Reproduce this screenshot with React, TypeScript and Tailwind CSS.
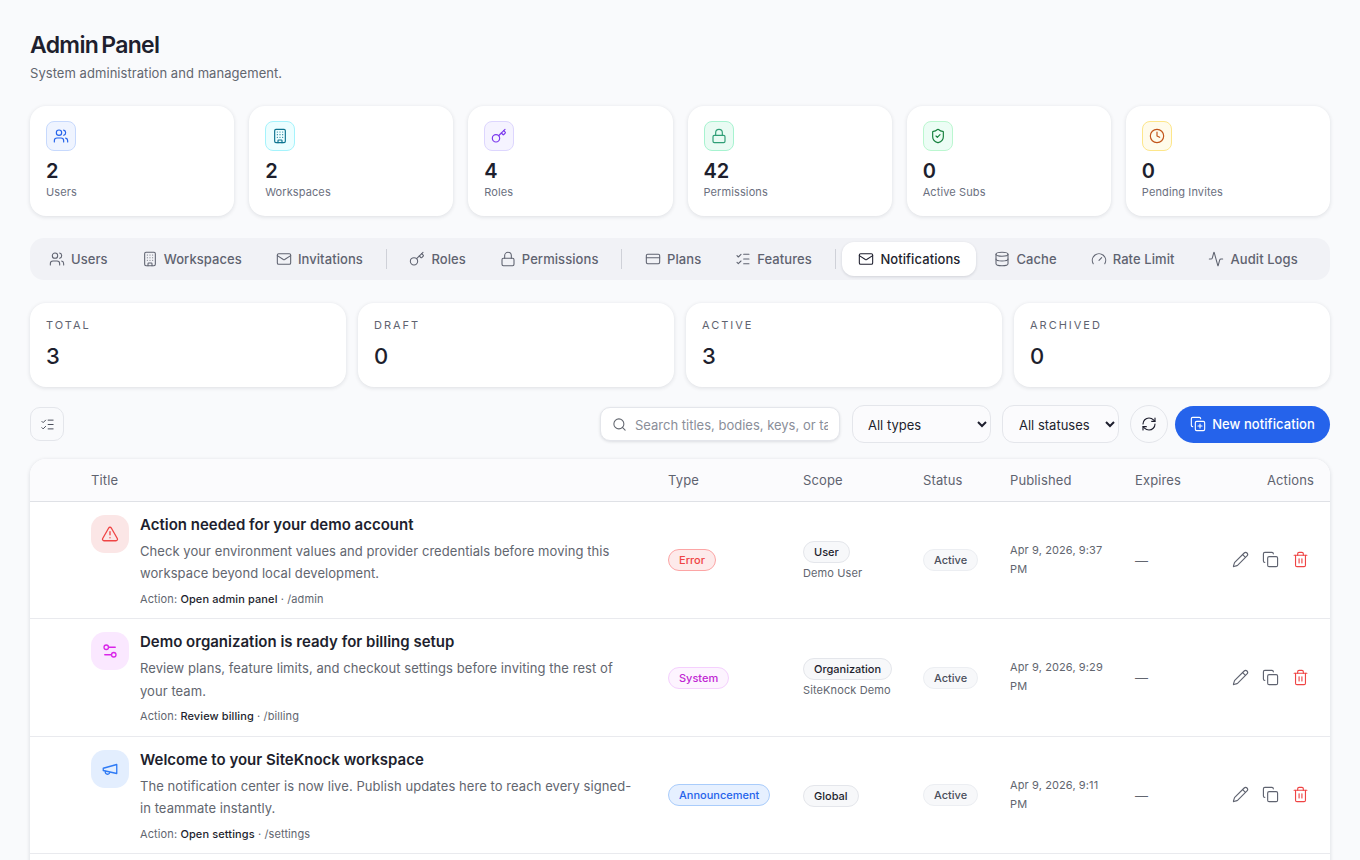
import { Fragment, type ComponentType } from "react";
import {
  Activity,
  Building,
  Clock,
  Copy,
  CopyPlus,
  CreditCard,
  Database,
  Gauge,
  Key,
  ListChecks,
  Lock,
  Mail,
  Pencil,
  RefreshCw,
  Search,
  Settings2,
  ShieldCheck,
  Trash2,
  TriangleAlert,
  Users,
} from "lucide-react";

type IconType = ComponentType<{ className?: string; strokeWidth?: number }>;

function Megaphone({ className, strokeWidth }: { className?: string; strokeWidth?: number }) {
  return (
    <svg className={className} viewBox="0 0 24 24" fill="none" stroke="currentColor" strokeWidth={strokeWidth} strokeLinecap="round" strokeLinejoin="round">
      <path d="m3 11 18-5v12L3 14v-3z" />
      <path d="M11.6 16.8a3 3 0 1 1-5.8-1.6" />
    </svg>
  );
}

const stats: { icon: IconType; value: string; label: string; tone: string }[] = [
  { icon: Users, value: "2", label: "Users", tone: "bg-[#eff4ff] border-[#c7d9fd] text-[#2563eb]" },
  { icon: Building, value: "2", label: "Workspaces", tone: "bg-[#ecfeff] border-[#a5f3fc] text-[#0e7490]" },
  { icon: Key, value: "4", label: "Roles", tone: "bg-[#f5f3ff] border-[#ddd6fe] text-[#7c3aed]" },
  { icon: Lock, value: "42", label: "Permissions", tone: "bg-[#e9fbf3] border-[#a7f3d0] text-[#2f9e76]" },
  { icon: ShieldCheck, value: "0", label: "Active Subs", tone: "bg-[#ecfdf5] border-[#bbf7d0] text-[#15803d]" },
  { icon: Clock, value: "0", label: "Pending Invites", tone: "bg-[#fffbeb] border-[#fde68a] text-[#c2541a]" },
];

const tabGroups: { icon: IconType; label: string; active?: boolean }[][] = [
  [
    { icon: Users, label: "Users" },
    { icon: Building, label: "Workspaces" },
    { icon: Mail, label: "Invitations" },
  ],
  [
    { icon: Key, label: "Roles" },
    { icon: Lock, label: "Permissions" },
  ],
  [
    { icon: CreditCard, label: "Plans" },
    { icon: ListChecks, label: "Features" },
  ],
  [
    { icon: Mail, label: "Notifications", active: true },
    { icon: Database, label: "Cache" },
    { icon: Gauge, label: "Rate Limit" },
    { icon: Activity, label: "Audit Logs" },
  ],
];

const summary = [
  { label: "Total", value: "3" },
  { label: "Draft", value: "0" },
  { label: "Active", value: "3" },
  { label: "Archived", value: "0" },
];

const rows: {
  icon: IconType;
  iconTone: string;
  title: string;
  body: string;
  action: string;
  path: string;
  type: string;
  typeTone: string;
  scope: string;
  scopeName?: string;
  published: string;
}[] = [
  {
    icon: TriangleAlert,
    iconTone: "bg-[#fbe6e6] text-[#ef4444]",
    title: "Action needed for your demo account",
    body: "Check your environment values and provider credentials before moving this workspace beyond local development.",
    action: "Open admin panel",
    path: "/admin",
    type: "Error",
    typeTone: "bg-[#fdeaea] border-[#fca5a5] text-[#ef4444]",
    scope: "User",
    scopeName: "Demo User",
    published: "Apr 9, 2026, 9:37 PM",
  },
  {
    icon: Settings2,
    iconTone: "bg-[#fae8ff] text-[#d926e9]",
    title: "Demo organization is ready for billing setup",
    body: "Review plans, feature limits, and checkout settings before inviting the rest of your team.",
    action: "Review billing",
    path: "/billing",
    type: "System",
    typeTone: "bg-[#fdf4ff] border-[#f5d0fe] text-[#c026d3]",
    scope: "Organization",
    scopeName: "SiteKnock Demo",
    published: "Apr 9, 2026, 9:29 PM",
  },
  {
    icon: Megaphone,
    iconTone: "bg-[#e3eefe] text-[#2f7bf5]",
    title: "Welcome to your SiteKnock workspace",
    body: "The notification center is now live. Publish updates here to reach every signed-in teammate instantly.",
    action: "Open settings",
    path: "/settings",
    type: "Announcement",
    typeTone: "bg-[#e6f0ff] border-[#a9ccfb] text-[#2563eb]",
    scope: "Global",
    published: "Apr 9, 2026, 9:11 PM",
  },
];

const headers = [
  { label: "Title", cls: "" },
  { label: "Type", cls: "" },
  { label: "Scope", cls: "" },
  { label: "Status", cls: "" },
  { label: "Published", cls: "" },
  { label: "Expires", cls: "" },
  { label: "Actions", cls: "text-right" },
];

function StatCard({ icon: Icon, value, label, tone }: (typeof stats)[number]) {
  return (
    <div className="h-[110px] rounded-2xl bg-white px-4 pt-[15px] shadow-[0_1px_4px_rgba(15,23,42,0.12)]">
      <div className={`flex h-[30px] w-[30px] items-center justify-center rounded-lg border ${tone}`}>
        <Icon className="h-4 w-4" strokeWidth={1.75} />
      </div>
      <p className="mt-2 text-[20px] leading-6 font-semibold text-[#1e1f2e]">{value}</p>
      <p className="mt-px text-[11px] leading-4 tracking-[0.01em] text-[#6b7080]">{label}</p>
    </div>
  );
}

function Pill({ children, className }: { children: React.ReactNode; className: string }) {
  return (
    <span className={`inline-flex h-[22px] items-center rounded-full border px-[10px] text-[11px] font-medium ${className}`}>
      {children}
    </span>
  );
}

export default function App() {
  return (
    <div className="h-screen overflow-hidden bg-[#f9fafc] px-[30px] pt-[29px] [font-family:Inter,sans-serif] text-[#1e1f2e]">
      <h1 className="text-[23px] leading-8 font-semibold tracking-[-0.03em] [word-spacing:-2px]">Admin Panel</h1>
      <p className="mt-[2px] text-[13px] leading-5 tracking-[0.004em] text-[#62666f]">System administration and management.</p>

      <div className="mt-[23px] grid grid-cols-6 gap-[15px]">
        {stats.map(s => (
          <StatCard key={s.label} {...s} />
        ))}
      </div>

      {/* Section tabs */}
      <div className="mt-[22px] flex h-[42px] items-center gap-[2px] rounded-[14px] bg-[#f1f2f6] px-[3px]">
        {tabGroups.map((group, i) => (
          <Fragment key={i}>
            {i > 0 && <div className="mx-[4.75px] h-5 w-px bg-[#cfd1d8]" />}
            {group.map(({ icon: Icon, label, active }) => (
              <button
                key={label}
                className={`flex h-[34px] items-center gap-[6px] rounded-xl px-4 text-[13px] font-medium tracking-[0.006em] ${
                  active ? "bg-white text-[#1e1f2e] shadow-[0_1px_3px_rgba(15,23,42,0.14)]" : "text-[#5f6370]"
                }`}
              >
                <Icon className="h-4 w-4" strokeWidth={1.6} />
                <span className="mt-[2px]">{label}</span>
              </button>
            ))}
          </Fragment>
        ))}
      </div>

      <div className="mt-[23px] grid grid-cols-4 gap-3">
        {summary.map(s => (
          <div key={s.label} className="h-[84px] rounded-2xl bg-white px-4 pt-[14px] shadow-[0_1px_4px_rgba(15,23,42,0.12)]">
            <p className="text-[11px] leading-4 tracking-[0.18em] text-[#5f6370] uppercase">{s.label}</p>
            <p className="mt-[7px] text-[22px] leading-8 font-medium text-[#1e1f2e]">{s.value}</p>
          </div>
        ))}
      </div>

      {/* Toolbar */}
      <div className="mt-[18px] flex h-[38px] items-center">
        <button className="flex h-[34px] w-[34px] items-center justify-center rounded-[10px] border border-[#e4e6eb] text-[#4b4f5c]">
          <ListChecks className="h-[15px] w-[15px]" strokeWidth={1.6} />
        </button>
        <div className="ml-auto flex h-[34px] w-[240px] items-center gap-2 rounded-[10px] border border-[#e4e6eb] bg-white px-[11px] shadow-[0_1px_3px_rgba(15,23,42,0.12)]">
          <Search className="h-[15px] w-[15px] shrink-0 text-[#62666f]" strokeWidth={1.7} />
          <input
            className="mt-[3px] w-full min-w-0 bg-transparent text-[13px] outline-none placeholder:text-[#8a8e99]"
            placeholder="Search titles, bodies, keys, or tags"
          />
        </div>
        <select className="ml-3 h-[38px] w-[139px] rounded-xl border border-[#e4e6eb] bg-[#fbfbfd] pt-[2px] pl-[11px] text-[13px] text-[#1e1f2e]">
          <option>All types</option>
        </select>
        <select className="ml-[11px] h-[38px] w-[117px] rounded-xl border border-[#e4e6eb] bg-[#fbfbfd] pt-[2px] pl-3 text-[13px] text-[#1e1f2e]">
          <option>All statuses</option>
        </select>
        <button className="ml-[11px] flex h-[38px] w-[38px] items-center justify-center rounded-full border border-[#e4e6eb] text-[#1e1f2e]">
          <RefreshCw className="h-4 w-4" strokeWidth={1.7} />
        </button>
        <button className="ml-[7px] flex h-[37px] w-[155px] items-center justify-center gap-[6px] rounded-full bg-[#2563eb] text-[13px] font-medium tracking-[0.006em] text-white">
          <CopyPlus className="h-4 w-4" strokeWidth={1.7} />
          <span className="mt-px">New notification</span>
        </button>
      </div>

      {/* Notifications table */}
      <div className="mt-[16px] overflow-hidden rounded-2xl bg-white shadow-[0_1px_4px_rgba(15,23,42,0.14)]">
        <table className="w-full table-fixed border-collapse">
          <colgroup>
            <col className="w-[45px]" />
            <col className="w-[577px]" />
            <col className="w-[135px]" />
            <col className="w-[120px]" />
            <col className="w-[87px]" />
            <col className="w-[125px]" />
            <col className="w-[111px]" />
            <col className="w-[100px]" />
          </colgroup>
          <thead>
            <tr className="h-[42px] border-b border-[#dfe1e6] bg-[#fbfbfd]">
              <th />
              {headers.map(h => (
                <th key={h.label} className={`px-4 pt-[2px] text-left text-[13px] font-normal tracking-[0.01em] text-[#5f6370] ${h.cls}`}>
                  {h.label}
                </th>
              ))}
            </tr>
          </thead>
          <tbody>
            {rows.map(({ icon: Icon, ...r }) => (
              <tr key={r.title} className="h-[117.5px] border-b border-[#e9eaee] align-middle">
                <td />
                <td className="px-4 align-top">
                  <div className="flex gap-[11px] pt-[13px]">
                    <div className={`flex h-[38px] w-[38px] shrink-0 items-center justify-center rounded-[14px] ${r.iconTone}`}>
                      <Icon className="h-[18px] w-[18px]" strokeWidth={1.75} />
                    </div>
                    <div className="min-w-0">
                      <p className="text-[15px] leading-5 font-semibold text-[#1e1f2e]">{r.title}</p>
                      <p className="mt-[5px] text-[13px] leading-[22.5px] tracking-[0.005em] text-[#62666f]">{r.body}</p>
                      <p className="mt-[6px] text-[11px] leading-4 tracking-[0.01em] text-[#62666f]">
                        Action: <span className="font-medium text-[#1e1f2e]">{r.action}</span> · {r.path}
                      </p>
                    </div>
                  </div>
                </td>
                <td className="px-4 pb-[2px]">
                  <Pill className={r.typeTone}>{r.type}</Pill>
                </td>
                <td className="px-4 pb-px">
                  <Pill className="border-[#e4e6eb] bg-[#f7f8fa] text-[#1e1f2e]">{r.scope}</Pill>
                  {r.scopeName && <p className="mt-[2px] text-[11px] leading-4 tracking-[0.01em] text-[#62666f]">{r.scopeName}</p>}
                </td>
                <td className="px-4 pb-[2px]">
                  <Pill className="border-[#eceef2] bg-[#f7f8fa] text-[#4b4f5c]">Active</Pill>
                </td>
                <td className="px-4 text-[11px] leading-[19px] tracking-[0.01em] text-[#62666f]">{r.published}</td>
                <td className="px-4 pt-[3px] text-[13px] text-[#62666f]">—</td>
                <td className="pr-[21px]">
                  <div className="flex items-center justify-end gap-[13px]">
                    <Pencil className="h-[17px] w-[17px] shrink-0 text-[#5f6370]" strokeWidth={1.6} />
                    <Copy className="h-[17px] w-[17px] shrink-0 text-[#5f6370]" strokeWidth={1.6} />
                    <Trash2 className="h-[17px] w-[17px] shrink-0 text-[#ef4444]" strokeWidth={1.6} />
                  </div>
                </td>
              </tr>
            ))}
          </tbody>
        </table>
        <div className="h-10" />
      </div>
    </div>
  );
}
